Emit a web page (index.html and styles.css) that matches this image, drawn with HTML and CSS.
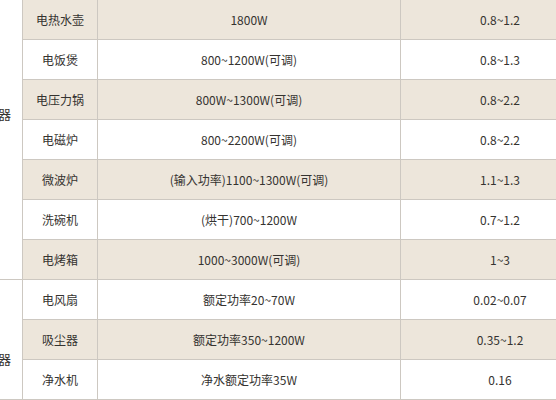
FILE: index.html
```html
<!DOCTYPE html>
<html lang="zh">
<head>
<meta charset="utf-8">
<title>家用电器功率表</title>
<link rel="stylesheet" href="styles.css">
</head>
<body>
<div class="viewport">
<table class="power-table">
  <colgroup>
    <col class="c-cat">
    <col class="c-name">
    <col class="c-power">
    <col class="c-factor">
  </colgroup>
  <tbody>
    <tr class="shade">
      <td class="cat cat-a" rowspan="7">厨房电器</td>
      <td>电热水壶</td><td>1800W</td><td>0.8~1.2</td>
    </tr>
    <tr><td>电饭煲</td><td>800~1200W(可调)</td><td>0.8~1.3</td></tr>
    <tr class="shade"><td>电压力锅</td><td>800W~1300W(可调)</td><td>0.8~2.2</td></tr>
    <tr><td>电磁炉</td><td>800~2200W(可调)</td><td>0.8~2.2</td></tr>
    <tr class="shade"><td>微波炉</td><td>(输入功率)1100~1300W(可调)</td><td>1.1~1.3</td></tr>
    <tr><td>洗碗机</td><td>(烘干)700~1200W</td><td>0.7~1.2</td></tr>
    <tr class="shade"><td>电烤箱</td><td>1000~3000W(可调)</td><td>1~3</td></tr>
    <tr>
      <td class="cat cat-b" rowspan="3">生活电器</td>
      <td>电风扇</td><td>额定功率20~70W</td><td>0.02~0.07</td>
    </tr>
    <tr class="shade"><td>吸尘器</td><td>额定功率350~1200W</td><td>0.35~1.2</td></tr>
    <tr><td>净水机</td><td>净水额定功率35W</td><td>0.16</td></tr>
  </tbody>
</table>
</div>
</body>
</html>
```
FILE: styles.css
```css
html, body {
  margin: 0;
  padding: 0;
  background: #ffffff;
}
.viewport {
  width: 556px;
  height: 400px;
  overflow: hidden;
}
.power-table {
  border-collapse: collapse;
  table-layout: fixed;
  width: 658px;
  margin-left: -59px;
  margin-top: -1px;
  font-family: "Noto Sans CJK SC", "Noto Sans", sans-serif;
  font-size: 12px;
  color: #353330;
}
.c-cat { width: 81px; }
.c-name { width: 75px; }
.c-power { width: 303px; }
.c-factor { width: 199px; }
.power-table td {
  border: 1px solid #cdc8c1;
  height: 39px;
  padding: 0;
  text-align: center;
  vertical-align: middle;
  line-height: 17px;
  white-space: nowrap;
  overflow: hidden;
}
.power-table tr.shade td {
  background: #ede6db;
}
.power-table tr td.cat {
  background: #ffffff;
  text-align: right;
  padding-right: 11px;
  font-size: 13px;
}
.power-table tr td.cat-a {
  padding-bottom: 53px;
}
.power-table tr td.cat-b {
  padding-top: 38px;
}
```
